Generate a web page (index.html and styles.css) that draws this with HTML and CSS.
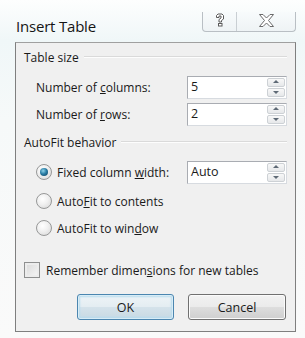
FILE: index.html
```html
<!DOCTYPE html>
<html>
<head>
<meta charset="utf-8">
<link rel="stylesheet" href="styles.css">
</head>
<body>
<div class="window">
  <div class="titlebar">
    <div class="title">Insert Table</div>
    <div class="controls">
      <div class="cbtn help">
        <svg width="12" height="14" viewBox="0 0 12 14">
          <path d="M2.5 4.5 V2.5 L4 1 H8 L9.5 2.5 V6 L7.5 7.5 V9 H5 V6.5 L7 5 V3 H5 V4.5 Z" fill="#fff" stroke="#5a5a5a" stroke-width="1"/>
          <rect x="4.5" y="10.5" width="3.5" height="2.5" fill="#fff" stroke="#5a5a5a" stroke-width="1"/>
        </svg>
      </div>
      <div class="cbtn close">
        <svg width="17" height="13" viewBox="0 0 17 13">
          <path d="M1.5 0.5 H5 L8.5 4 L12 0.5 H15.5 L10.5 6.5 L15.5 12.5 H12 L8.5 9 L5 12.5 H1.5 L6.5 6.5 Z" fill="#fff" stroke="#6a6a6a" stroke-width="1"/>
        </svg>
      </div>
    </div>
  </div>
  <div class="panel">
    <div class="group-title">Table size</div>
    <div class="field first">
      <span>Number of <u>c</u>olumns:</span>
      <div class="spin"><span class="val">5</span><div class="arrows"><div class="up"></div><div class="down"></div></div></div>
    </div>
    <div class="field">
      <span>Number of <u>r</u>ows:</span>
      <div class="spin"><span class="val">2</span><div class="arrows"><div class="up"></div><div class="down"></div></div></div>
    </div>
    <div class="group-title second">AutoFit behavior</div>
    <div class="field radio-field">
      <label class="radio-label"><span class="radio checked"></span><span>Fixed column <u>w</u>idth:</span></label>
      <div class="spin"><span class="val">Auto</span><div class="arrows"><div class="up"></div><div class="down"></div></div></div>
    </div>
    <label class="radio-label option"><span class="radio"></span><span>Auto<u>F</u>it to contents</span></label>
    <label class="radio-label option"><span class="radio"></span><span>AutoFit to win<u>d</u>ow</span></label>
    <label class="check-label"><span class="check"></span><span>Remember dimen<u>s</u>ions for new tables</span></label>
    <div class="buttons">
      <div class="btn default">OK</div>
      <div class="btn">Cancel</div>
    </div>
  </div>
</div>
</body>
</html>
```
FILE: styles.css
```css
* { box-sizing: border-box; }
html, body { margin: 0; padding: 0; }
body {
  width: 305px;
  height: 338px;
  overflow: hidden;
  font-family: "Open Sans", "Noto Sans", sans-serif;
  font-size: 12px;
  color: #1a1a1a;
  background: linear-gradient(180deg, #fdfefe 0px, #f0f7f8 40px, #f6f9f9 120px, #fafafa 338px);
}
.window {
  display: flex;
  flex-direction: column;
  height: 338px;
}
.titlebar {
  height: 42px;
  display: flex;
  justify-content: space-between;
  align-items: flex-start;
  padding-left: 16px;
  padding-right: 9px;
}
.title {
  font-size: 15px;
  line-height: 20px;
  margin-top: 16px;
  color: #151515;
  letter-spacing: -0.2px;
}
.controls {
  display: flex;
  margin-top: 12px;
  height: 20px;
  border: 1px solid #b9bfc4;
  border-top: none;
  border-radius: 0 0 4px 4px;
  background: linear-gradient(180deg, #f8fbfc, #eef3f5);
}
.cbtn {
  display: flex;
  align-items: center;
  justify-content: center;
}
.help {
  width: 34px;
  border-right: 1px solid #c9cfd3;
  padding-bottom: 3px;
}
.close {
  width: 58px;
  padding-bottom: 3px;
}
.panel {
  flex: 1;
  margin: 0 9px 6px 15px;
  border: 1px solid #7f7f7f;
  border-top-color: #a0a0a0;
  background: #f0f0f0;
  padding: 7px 8px 0 8px;
  display: flex;
  flex-direction: column;
}
.group-title {
  display: flex;
  align-items: center;
  line-height: 16px;
  height: 16px;
}
.group-title::after {
  content: "";
  flex: 1;
  margin-left: 5px;
  border-top: 1px solid #dadada;
  border-bottom: 1px solid #fdfdfd;
  margin-top: -2px;
}
.group-title.second { margin-top: 9px; }
.field {
  display: flex;
  align-items: center;
  justify-content: space-between;
  margin-left: 12px;
  height: 24px;
  margin-top: 3px;
}
.field.first { margin-top: 9px; }
.field.radio-field { margin-top: 9px; }
.spin {
  width: 100px;
  height: 23px;
  background: #fff;
  border: 1px solid #a9acb2;
  border-bottom-color: #d7dbe0;
  border-right-color: #d7dbe0;
  display: flex;
  align-items: stretch;
}
.val {
  flex: 1;
  padding-left: 3px;
  line-height: 20px;
  font-size: 12.5px;
}
.arrows {
  width: 19px;
  display: flex;
  flex-direction: column;
  padding: 1px 1px 1px 0;
  gap: 1px;
}
.up, .down {
  flex: 1;
  border: 1px solid #cdd1d5;
  border-radius: 2px;
  background: linear-gradient(180deg, #f8f8f8, #e6e8ea);
  position: relative;
}
.up::after, .down::after {
  content: "";
  position: absolute;
  left: 50%;
  top: 50%;
  margin-left: -3px;
  width: 0;
  height: 0;
  border-left: 3px solid transparent;
  border-right: 3px solid transparent;
}
.up::after { border-bottom: 3px solid #5f6a76; margin-top: -2px; }
.down::after { border-top: 3px solid #5f6a76; margin-top: -1px; }
.radio-label {
  display: flex;
  align-items: center;
  gap: 5px;
}
.option {
  margin-left: 12px;
  height: 20px;
  margin-top: 7px;
}
.radio {
  width: 16px;
  height: 16px;
  border-radius: 50%;
  border: 1px solid #979898;
  background: radial-gradient(circle at 40% 35%, #ffffff 0%, #f0f0f0 45%, #d4d4d4 100%);
  position: relative;
  flex: none;
}
.radio.checked::after {
  content: "";
  position: absolute;
  left: 3px;
  top: 3px;
  width: 8px;
  height: 8px;
  border-radius: 50%;
  background: radial-gradient(circle at 40% 35%, #8fd3e8 0%, #2a7ea6 45%, #0d3c58 100%);
}
.check-label {
  display: flex;
  align-items: center;
  gap: 6px;
  margin-top: 23px;
  height: 18px;
}
.check {
  width: 16px;
  height: 16px;
  border: 1px solid #8e8f8f;
  background: linear-gradient(135deg, #d8d8d8, #f7f7f7);
  box-shadow: inset 0 0 0 2px #ececec;
  flex: none;
}
.buttons {
  display: flex;
  justify-content: flex-end;
  gap: 14px;
  margin-top: 15px;
  padding-right: 1px;
}
.btn {
  width: 98px;
  height: 26px;
  border: 1px solid #707070;
  border-radius: 3px;
  background: linear-gradient(180deg, #f2f2f2 0%, #ebebeb 48%, #dddddd 52%, #cfcfcf 100%);
  box-shadow: inset 0 0 0 1px #fbfbfb;
  display: flex;
  align-items: center;
  justify-content: center;
  font-size: 12.5px;
}
.btn.default {
  width: 97px;
  border-color: #4b86b0;
  box-shadow: inset 0 0 0 1px #d8ecf6, inset 0 0 2px 2px #b8dcee;
  background: linear-gradient(180deg, #eef4f7 0%, #e4edf2 48%, #d4e2ea 52%, #c8d9e3 100%);
}
```
